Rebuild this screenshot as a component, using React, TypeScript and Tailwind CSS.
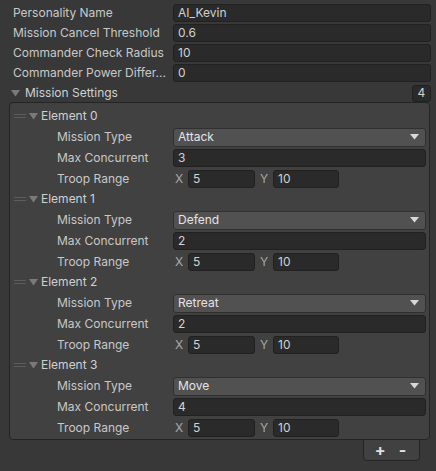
import React from "react";

const font = { fontFamily: "Inter, 'Noto Sans', sans-serif" };

function Field({ value, className = "" }: { value: string; className?: string }) {
  return (
    <div
      className={`h-[18px] shrink-0 rounded-[3px] bg-[#2a2a2a] border border-[#212121] flex items-center pl-[4px] text-[12px] text-[#d2d2d2] ${className}`}
    >
      {value}
    </div>
  );
}

function Dropdown({ value }: { value: string }) {
  return (
    <div className="h-[19px] w-[253px] shrink-0 rounded-[3px] bg-[#515151] border border-[#303030] flex items-center justify-between pl-[4px] pr-[6px] text-[12px] text-[#e4e4e4]">
      <span>{value}</span>
      <svg width="9" height="6" viewBox="0 0 9 6">
        <polygon points="0,0 9,0 4.5,5.5" fill="#d8d8d8" />
      </svg>
    </div>
  );
}

function TopRow({ label, value }: { label: string; value: string }) {
  return (
    <div className="h-[20px] flex items-center">
      <div className="w-[173px] shrink-0 pl-[13px] text-[12px] text-[#c8c8c8] whitespace-nowrap overflow-hidden">{label}</div>
      <Field value={value} className="w-[258px]" />
    </div>
  );
}

function Element({ idx, type, max }: { idx: number; type: string; max: string }) {
  return (
    <div className="flex flex-col">
      <div className="h-[20px] flex items-center">
        <div className="w-[12px] ml-[4px] flex flex-col gap-[2px]">
          <div className="h-px bg-[#5c5c5c]" />
          <div className="h-px bg-[#5c5c5c]" />
        </div>
        <svg width="9" height="8" viewBox="0 0 9 8" className="ml-[3px]">
          <polygon points="0,1 9,1 4.5,7.5" fill="#7a7a7a" />
        </svg>
        <span className="ml-[3px] text-[12px] text-[#d0d0d0]">Element {idx}</span>
      </div>
      <div className="h-[20px] mt-[1px] flex items-center">
        <div className="w-[163px] shrink-0 pl-[47px] text-[12px] text-[#c8c8c8]">Mission Type</div>
        <Dropdown value={type} />
      </div>
      <div className="h-[20px] mt-[1px] flex items-center">
        <div className="w-[163px] shrink-0 pl-[47px] text-[12px] text-[#c8c8c8]">Max Concurrent</div>
        <Field value={max} className="w-[253px]" />
      </div>
      <div className="h-[20px] mt-[1px] flex items-center">
        <div className="w-[163px] shrink-0 pl-[47px] text-[12px] text-[#c8c8c8]">Troop Range</div>
        <span className="ml-[2px] w-[13px] text-[12px] text-[#a8a8a8]">X</span>
        <Field value="5" className="w-[67px]" />
        <span className="ml-[5px] w-[13px] text-[12px] text-[#a8a8a8]">Y</span>
        <Field value="10" className="w-[66px]" />
      </div>
    </div>
  );
}

export default function App() {
  const els = [
    { type: "Attack", max: "3" },
    { type: "Defend", max: "2" },
    { type: "Retreat", max: "2" },
    { type: "Move", max: "4" },
  ];
  return (
    <div style={font} className="w-[436px] h-[471px] bg-[#383838] overflow-hidden pt-[3px]">
      <TopRow label="Personality Name" value="AI_Kevin" />
      <TopRow label="Mission Cancel Threshold" value="0.6" />
      <TopRow label="Commander Check Radius" value="10" />
      <TopRow label="Commander Power Differ..." value="0" />
      <div className="h-[20px] flex items-center">
        <svg width="9" height="8" viewBox="0 0 9 8" className="ml-[11px]">
          <polygon points="0,1 9,1 4.5,7.5" fill="#7a7a7a" />
        </svg>
        <span className="ml-[5px] text-[12px] text-[#d0d0d0]">Mission Settings</span>
        <div className="ml-auto mr-[5px] h-[17px] w-[19px] rounded-[3px] bg-[#2a2a2a] border border-[#212121] flex items-center justify-center text-[12px] text-[#d2d2d2]">
          4
        </div>
      </div>
      <div className="ml-[9px] -mt-px w-[421px] rounded-[4px] border border-[#242424] bg-[#414141] pt-[3px] pb-[1px]">
        {els.map((e, i) => (
          <Element key={i} idx={i} type={e.type} max={e.max} />
        ))}
      </div>
      <div className="ml-[363px] w-[57px] h-[22px] -mt-px rounded-b-[4px] border border-[#242424] bg-[#414141] flex items-center justify-center gap-[13px] pr-[2px] text-[16px] font-bold text-[#e0e0e0]">
        <span>+</span>
        <span>-</span>
      </div>
    </div>
  );
}
